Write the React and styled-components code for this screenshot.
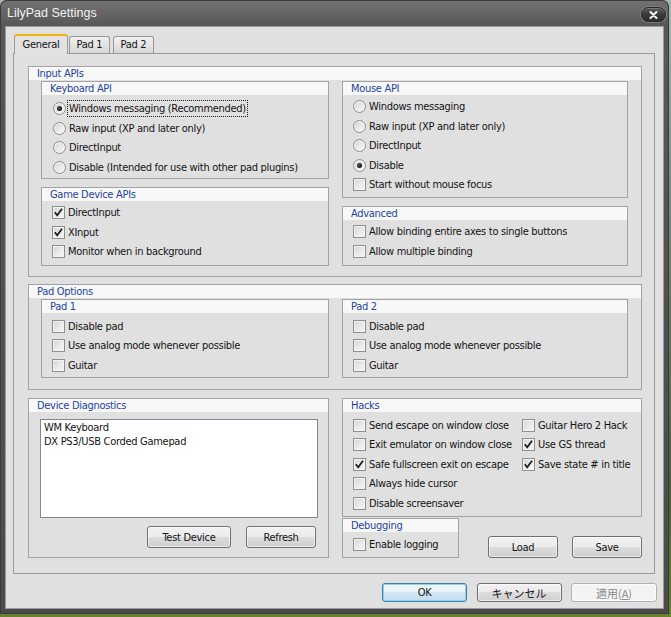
import React from 'react';
import styled, { createGlobalStyle } from 'styled-components';

const GlobalStyle = createGlobalStyle`
html, body {
  margin: 0;
  padding: 0;
}
body {
  width: 671px;
  height: 617px;
  overflow: hidden;
  background: linear-gradient(180deg, #a3b8b2 0%, #74887a 35%, #4c5c3a 80%, #66822e 100%);
  font-family: "DejaVu Sans Condensed", "DejaVu Sans", "Noto Sans CJK JP", sans-serif;
  font-size: 11px;
  letter-spacing: -0.3px;
  color: #141414;
}
`

const Window = styled.div`
width: 669px;
height: 614px;
display: flex;
flex-direction: column;
background: linear-gradient(180deg, #727272 0px, #575757 26px, #4b4b4b 100%);
border-radius: 7px 7px 0 0;
box-shadow: inset 0 0 0 1px #3a3a3a;
`

const TitleBar = styled.div`
height: 27px;
flex: none;
display: flex;
justify-content: space-between;
padding: 0 3px 0 7px;
`

const Title = styled.div`
font-family: "Liberation Sans", Arial, sans-serif;
font-size: 12.5px;
letter-spacing: 0;
color: #f2f2f2;
line-height: 27px;
`

const CloseButton = styled.div`
width: 25px;
height: 15px;
margin-top: 7px;
box-sizing: border-box;
border-radius: 8px;
border: 1px solid #262626;
background: linear-gradient(180deg, #5a5a5a 0%, #3a3a3a 50%, #2e2e2e 100%);
box-shadow: 0 0 0 1px rgba(160, 160, 160, 0.45), inset 0 1px 0 rgba(255, 255, 255, 0.2);
display: flex;
align-items: center;
justify-content: center;
`

const Client = styled.div`
flex: 1;
margin: 0 6px 6px 6px;
background: #e0e0e0;
box-shadow: 0 0 0 1px #9a9a9a;
padding: 7px 6px 6px 7px;
display: flex;
flex-direction: column;
`

const TabControl = styled.div`
margin-right: 2px;
display: flex;
flex-direction: column;
`

const TabStrip = styled.div`
height: 19px;
display: flex;
align-items: flex-end;
padding-left: 1px;
`

const Tab = styled.div`
position: relative;
z-index: ${({ $active }) => ($active ? 2 : 1)};
box-sizing: border-box;
width: ${({ $w }) => $w}px;
height: ${({ $active }) => ($active ? '20px' : '17px')};
margin-bottom: ${({ $active }) => ($active ? '-1px' : '0')};
margin-right: ${({ $mr }) => $mr || 0}px;
border: 1px solid #999;
border-bottom: none;
border-top: ${({ $active }) => ($active ? '2px solid #f2b203' : '1px solid #999')};
border-radius: 3px 3px 0 0;
background: ${({ $active }) =>
  $active ? '#e2e2e2' : 'linear-gradient(180deg, #f0f0f0 0%, #e4e4e4 50%, #d6d6d6 100%)'};
text-align: center;
line-height: ${({ $active }) => ($active ? '17px' : '15px')};
`

const TabPanel = styled.div`
box-sizing: border-box;
height: 521px;
border: 1px solid #9a9a9a;
background: #e0e0e0;
padding: 12px 12px 0 14px;
display: flex;
flex-direction: column;
`

const GroupBox = styled.div`
box-sizing: border-box;
border: 1px solid #a3a3a3;
background: #e0e0e0;
margin-top: ${({ $mt }) => $mt || 0}px;
width: ${({ $w }) => ($w ? `${$w}px` : 'auto')};
flex: none;
`

const GroupTitle = styled.div`
height: 13px;
line-height: 13px;
background: #f8f8f8;
color: #2343a4;
padding-left: 8px;
white-space: nowrap;
`

const GroupBody = styled.div`
padding: ${({ $pt }) => $pt}px 0 ${({ $pb }) => $pb}px ${({ $pl }) => ($pl === undefined ? 10 : $pl)}px;
`

const TwoColumns = styled.div`
display: grid;
grid-template-columns: 288px 1fr;
column-gap: 13px;
padding: 1px 13px ${({ $pb }) => $pb}px 12px;
`

const Stack = styled.div`
display: flex;
flex-direction: column;
gap: 8px;
`

const Row = styled.div`
height: 19.5px;
display: flex;
align-items: center;
white-space: nowrap;
`

const Mark = styled.span`
flex: none;
box-sizing: border-box;
width: 13px;
height: 13px;
margin-right: 3px;
border: 1px solid #8e8f8f;
border-radius: ${({ $round }) => ($round ? '50%' : '0')};
background: linear-gradient(135deg, #d4d4d4 0%, #ececec 60%, #f6f6f6 100%);
box-shadow: inset 0 0 0 1px #f3f3f3;
display: flex;
align-items: center;
justify-content: center;
`

const Dot = styled.span`
width: 5px;
height: 5px;
border-radius: 50%;
background: radial-gradient(circle at 40% 40%, #555 0%, #111 70%);
`

const FocusLabel = styled.span`
border: 1px dotted #1a1a1a;
padding: 1px 1px;
margin-left: -2px;
`

const HacksColumns = styled.div`
display: grid;
grid-template-columns: 169px 1fr;
padding: 3.25px 0 3.25px 10px;
`

const BottomRow = styled.div`
display: grid;
grid-template-columns: 301px 1fr;
column-gap: 13px;
margin-top: 8px;
`

const ListBox = styled.div`
box-sizing: border-box;
height: 99px;
margin: 7px 10px 0 11px;
border: 1px solid #828790;
background: #fff;
padding: 1px 3px;
line-height: 14px;
`

const ButtonRow = styled.div`
display: flex;
justify-content: flex-end;
gap: ${({ $gap }) => $gap}px;
margin-top: ${({ $mt }) => $mt || 0}px;
padding: 0 ${({ $pr }) => $pr || 0}px ${({ $pb }) => $pb || 0}px 0;
flex: ${({ $grow }) => ($grow ? 1 : 'none')};
`

const Button = styled.div`
box-sizing: border-box;
width: ${({ $w }) => $w}px;
height: ${({ $h }) => $h || 22}px;
border: 1px solid ${({ $default, $disabled }) => ($default ? '#3c7fb1' : $disabled ? '#adb2b5' : '#707070')};
border-radius: 3px;
background: ${({ $disabled, $default }) =>
  $disabled
    ? '#f4f4f4'
    : $default
    ? 'linear-gradient(180deg, #f3f9fc 0%, #e6f1f8 50%, #d4e6f2 50%, #c6def0 100%)'
    : 'linear-gradient(180deg, #f2f2f2 0%, #ebebeb 50%, #dddddd 50%, #cfcfcf 100%)'};
box-shadow: ${({ $default }) => ($default ? 'inset 0 0 0 1px #8fd2f0' : 'inset 0 0 0 1px rgba(255,255,255,0.6)')};
color: ${({ $disabled }) => ($disabled ? '#8a8a8a' : '#141414')};
display: flex;
align-items: center;
justify-content: center;
white-space: nowrap;
`

const Cjk = styled.span`
font-family: "Noto Sans CJK JP", sans-serif;
font-size: 11px;
letter-spacing: 0;
`

const DebugRow = styled.div`
display: flex;
align-items: flex-end;
margin-top: 1px;
`

const FooterButtons = styled.div`
display: flex;
justify-content: flex-end;
gap: 9.5px;
margin-top: 9px;
`

const CheckIcon = () => (
  <svg width="11" height="11" viewBox="0 0 11 11">
    <path d="M1.8 5.2 L4.2 8.2 L9 1.8" fill="none" stroke="#1e1e1e" strokeWidth="1.8" />
  </svg>
)

const Check = ({ checked, children }) => (
  <Row>
    <Mark>{checked && <CheckIcon />}</Mark>
    {children}
  </Row>
)

const Radio = ({ checked, children }) => (
  <Row>
    <Mark $round>{checked && <Dot />}</Mark>
    {children}
  </Row>
)

const Group = ({ title, pt, pb, pl, w, mt, children }) => (
  <GroupBox $w={w} $mt={mt}>
    <GroupTitle>{title}</GroupTitle>
    <GroupBody $pt={pt} $pb={pb} $pl={pl}>
      {children}
    </GroupBody>
  </GroupBox>
)

const PadGroup = ({ title }) => (
  <Group title={title} pt={3.25} pb={2.25}>
    <Check>Disable pad</Check>
    <Check>Use analog mode whenever possible</Check>
    <Check>Guitar</Check>
  </Group>
)

export default function App() {
  return (
    <>
      <GlobalStyle />
      <Window>
        <TitleBar>
          <Title>LilyPad Settings</Title>
          <CloseButton>
            <svg width="9" height="8" viewBox="0 0 9 8">
              <path d="M1.5 1 L7.5 7 M7.5 1 L1.5 7" stroke="#f4f4f4" strokeWidth="2" strokeLinecap="round" />
            </svg>
          </CloseButton>
        </TitleBar>

        <Client>
          <TabControl>
            <TabStrip>
              <Tab $active $w={54} $mr={1}>General</Tab>
              <Tab $w={41} $mr={3}>Pad 1</Tab>
              <Tab $w={41}>Pad 2</Tab>
            </TabStrip>

            <TabPanel>
              <GroupBox>
                <GroupTitle>Input APIs</GroupTitle>
                <TwoColumns $pb={10}>
                  <Stack>
                    <Group title="Keyboard API" pt={4} pb={1} pl={11}>
                      <Radio checked>
                        <FocusLabel>Windows messaging (Recommended)</FocusLabel>
                      </Radio>
                      <Radio>Raw input (XP and later only)</Radio>
                      <Radio>DirectInput</Radio>
                      <Radio>Disable (Intended for use with other pad plugins)</Radio>
                    </Group>
                    <Group title="Game Device APIs" pt={2} pb={3.5}>
                      <Check checked>DirectInput</Check>
                      <Check checked>XInput</Check>
                      <Check>Monitor when in background</Check>
                    </Group>
                  </Stack>
                  <Stack>
                    <Group title="Mouse API" pt={2} pb={2.5}>
                      <Radio>Windows messaging</Radio>
                      <Radio>Raw input (XP and later only)</Radio>
                      <Radio>DirectInput</Radio>
                      <Radio checked>Disable</Radio>
                      <Check>Start without mouse focus</Check>
                    </Group>
                    <Group title="Advanced" pt={2} pb={4}>
                      <Check>Allow binding entire axes to single buttons</Check>
                      <Check>Allow multiple binding</Check>
                    </Group>
                  </Stack>
                </TwoColumns>
              </GroupBox>

              <GroupBox $mt={7}>
                <GroupTitle>Pad Options</GroupTitle>
                <TwoColumns $pb={11}>
                  <PadGroup title="Pad 1" />
                  <PadGroup title="Pad 2" />
                </TwoColumns>
              </GroupBox>

              <BottomRow>
                <GroupBox>
                  <GroupTitle>Device Diagnostics</GroupTitle>
                  <ListBox>
                    <div>WM Keyboard</div>
                    <div>DX PS3/USB Corded Gamepad</div>
                  </ListBox>
                  <ButtonRow $gap={15} $mt={8} $pr={12} $pb={9}>
                    <Button $w={84}>Test Device</Button>
                    <Button $w={70}>Refresh</Button>
                  </ButtonRow>
                </GroupBox>

                <div>
                  <GroupBox>
                    <GroupTitle>Hacks</GroupTitle>
                    <HacksColumns>
                      <div>
                        <Check>Send escape on window close</Check>
                        <Check>Exit emulator on window close</Check>
                        <Check checked>Safe fullscreen exit on escape</Check>
                        <Check>Always hide cursor</Check>
                        <Check>Disable screensaver</Check>
                      </div>
                      <div>
                        <Check>Guitar Hero 2 Hack</Check>
                        <Check checked>Use GS thread</Check>
                        <Check checked>Save state # in title</Check>
                      </div>
                    </HacksColumns>
                  </GroupBox>
                  <DebugRow>
                    <Group title="Debugging" w={117} pt={2.25} pb={3.25}>
                      <Check>Enable logging</Check>
                    </Group>
                    <ButtonRow $gap={14} $grow>
                      <Button $w={70}>Load</Button>
                      <Button $w={70}>Save</Button>
                    </ButtonRow>
                  </DebugRow>
                </div>
              </BottomRow>
            </TabPanel>
          </TabControl>

          <FooterButtons>
            <Button $default $w={85} $h={19}>OK</Button>
            <Button $w={85} $h={19}><Cjk>キャンセル</Cjk></Button>
            <Button $disabled $w={86} $h={19}><Cjk>適用(<u>A</u>)</Cjk></Button>
          </FooterButtons>
        </Client>
      </Window>
    </>
  )
}
